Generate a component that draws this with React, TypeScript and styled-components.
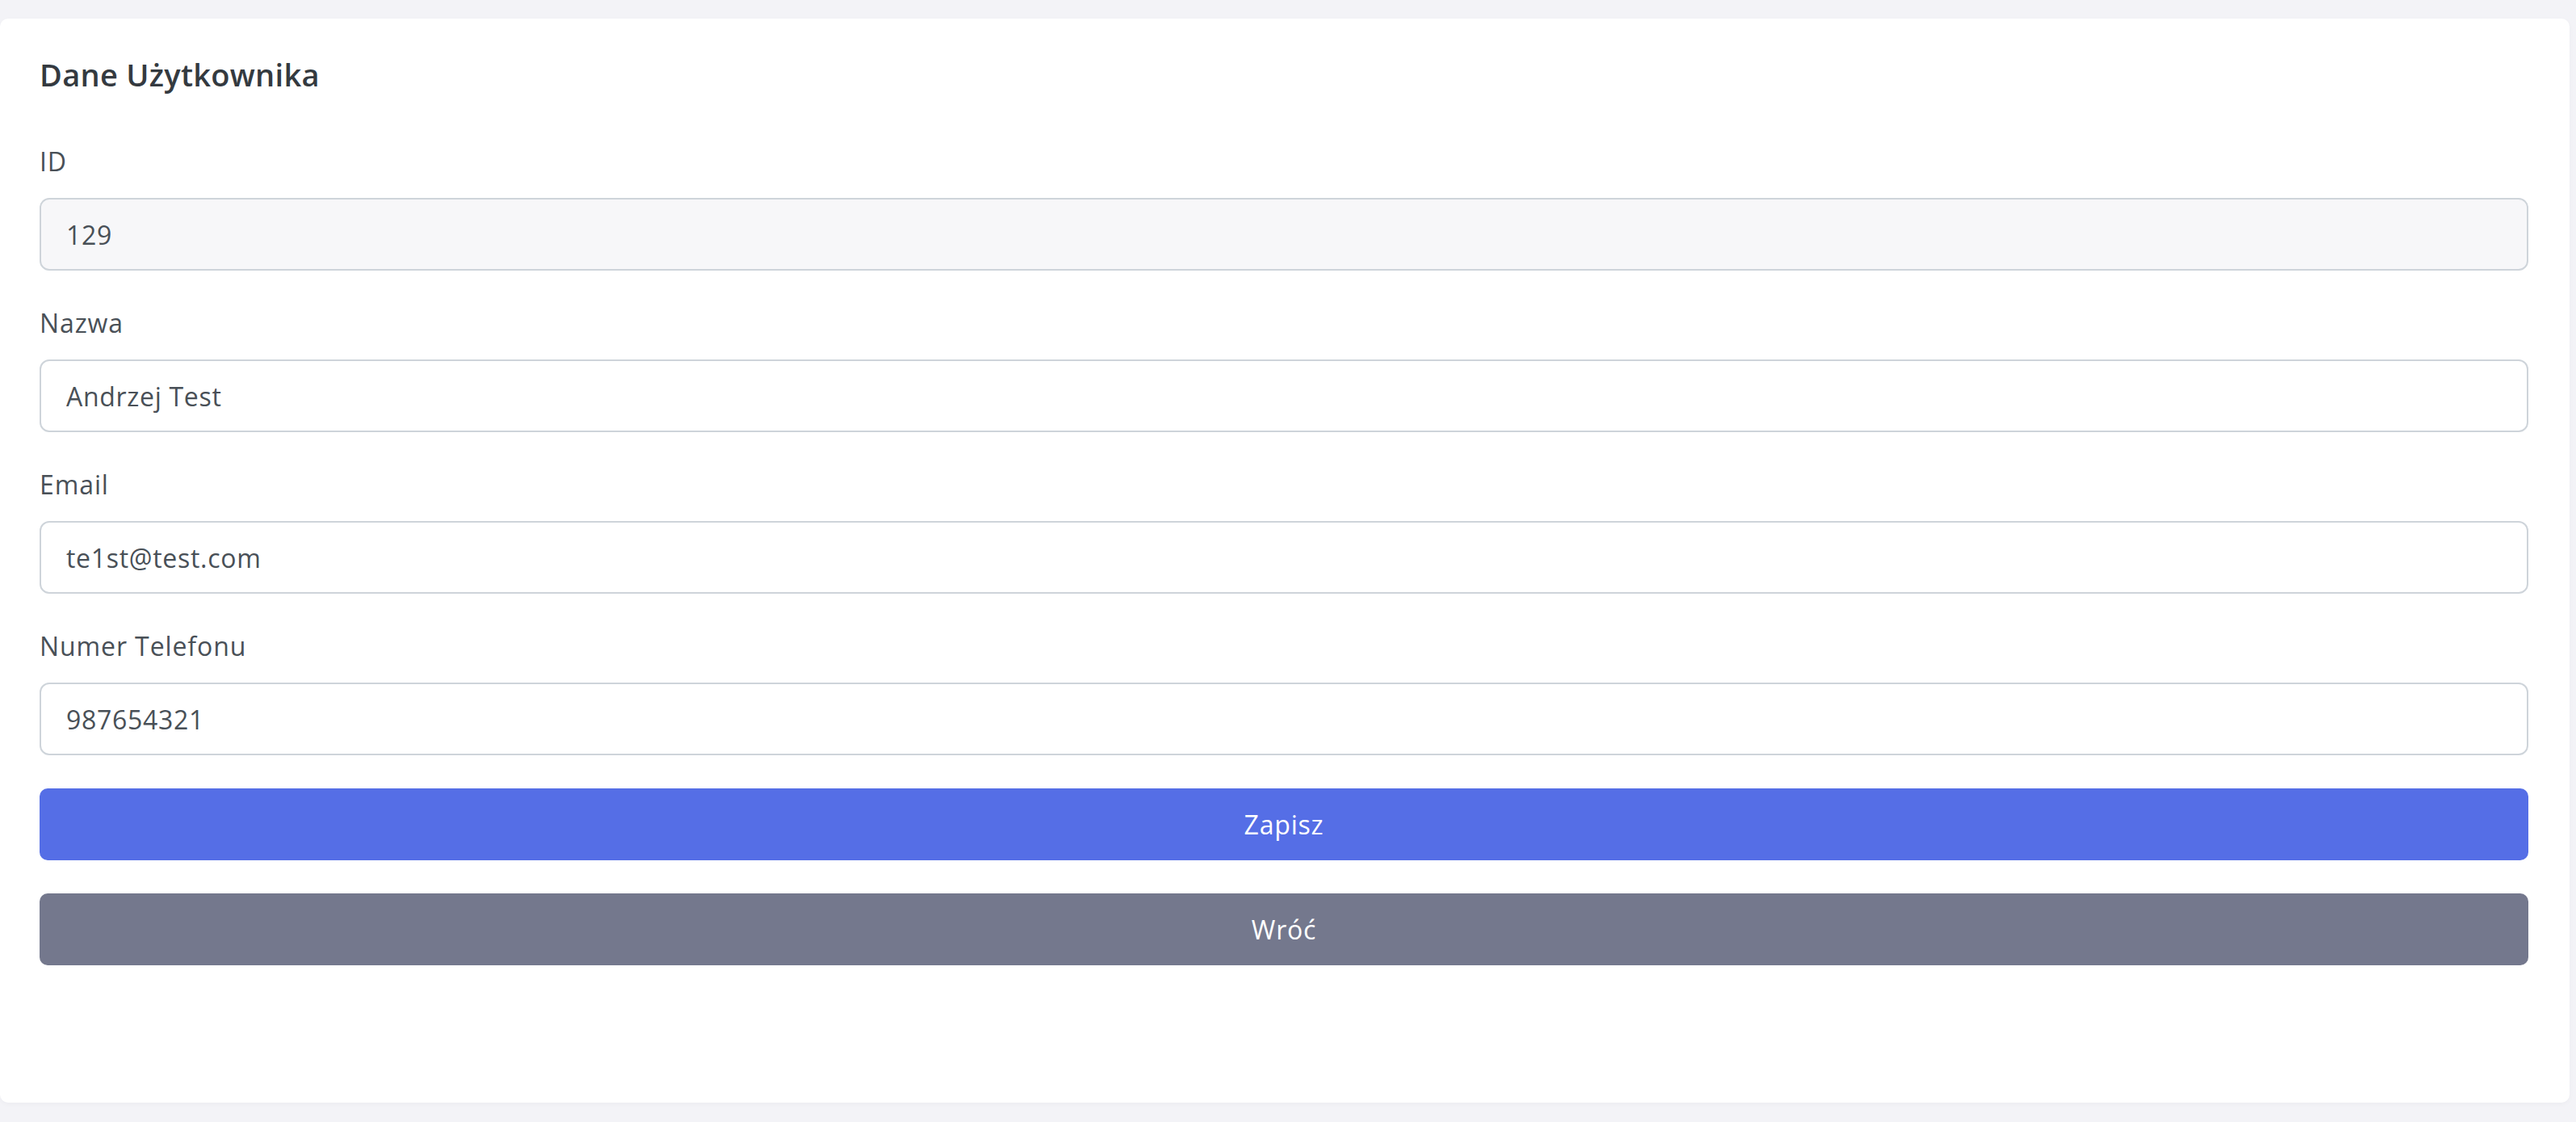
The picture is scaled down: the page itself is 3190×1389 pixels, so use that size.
import styled, { createGlobalStyle } from 'styled-components';

const GlobalStyle = createGlobalStyle`
  html, body {
    margin: 0;
    padding: 0;
    background: #f3f3f7;
  }
  * {
    box-sizing: border-box;
  }
`;

const Page = styled.div`
  padding: 23px 8px 24px 0;
  font-family: 'Open Sans', 'Noto Sans', sans-serif;
  color: #495057;
`;

const Card = styled.form`
  background: #ffffff;
  border-radius: 10px;
  box-shadow: 0 2px 6px rgba(18, 38, 63, 0.03);
  padding: 46px 51px 0 49px;
  height: 1342px;
  display: flex;
  flex-direction: column;
`;

const Title = styled.h4`
  margin: 0 0 61px;
  font-size: 38px;
  line-height: 46px;
  font-weight: 600;
  letter-spacing: 0.3px;
  color: #343a40;
`;

const Field = styled.div`
  display: flex;
  flex-direction: column;
  margin-bottom: 41px;
`;

const Label = styled.label`
  font-size: 32px;
  line-height: 48px;
  font-weight: 500;
  letter-spacing: 0.9px;
  color: #495057;
  margin-bottom: 21px;
`;

const Input = styled.input`
  height: 90px;
  width: 100%;
  padding: 0 31px;
  font-family: inherit;
  font-size: 32px;
  letter-spacing: 0.7px;
  color: #495057;
  background: #ffffff;
  border: 2px solid #ced4da;
  border-radius: 12px;
  outline: none;

  &:disabled {
    background: #f7f7f9;
    color: #495057;
    -webkit-text-fill-color: #495057;
    opacity: 1;
  }
`;

const Button = styled.button<{ $variant: 'primary' | 'secondary' }>`
  height: 89px;
  width: 100%;
  border: none;
  border-radius: 10px;
  font-family: inherit;
  font-size: 32px;
  letter-spacing: 0.8px;
  color: #ffffff;
  cursor: pointer;
  background: ${(p) => (p.$variant === 'primary' ? '#556ee6' : '#74788d')};
  margin-top: ${(p) => (p.$variant === 'primary' ? '0' : '41px')};
`;

const fields = [
  { label: 'ID', value: '129', disabled: true },
  { label: 'Nazwa', value: 'Andrzej Test' },
  { label: 'Email', value: 'te1st@test.com' },
  { label: 'Numer Telefonu', value: '987654321' },
];

export default function App() {
  return (
    <>
      <GlobalStyle />
      <Page>
        <Card onSubmit={(e) => e.preventDefault()}>
          <Title>Dane Użytkownika</Title>
          {fields.map((f) => (
            <Field key={f.label}>
              <Label>{f.label}</Label>
              <Input defaultValue={f.value} disabled={f.disabled} />
            </Field>
          ))}
          <Button type="submit" $variant="primary">
            Zapisz
          </Button>
          <Button type="button" $variant="secondary">
            Wróć
          </Button>
        </Card>
      </Page>
    </>
  );
}
